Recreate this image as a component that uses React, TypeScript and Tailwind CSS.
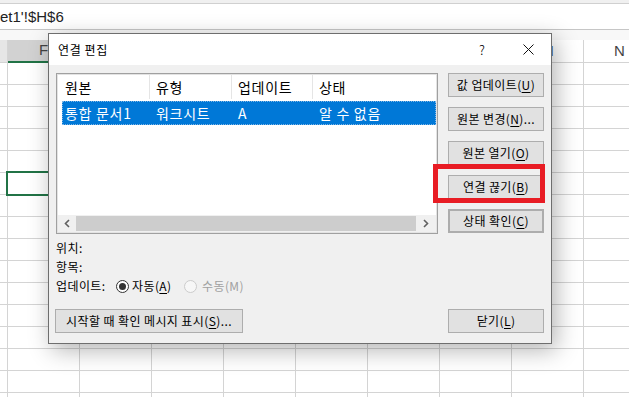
import React from "react";

const cols = ["F", "G", "H", "I", "J", "K", "L", "M", "N"];
const rows = Array.from({ length: 16 }, (_, i) => i);

function Btn({ children, className = "" }: { children: React.ReactNode; className?: string }) {
  return (
    <div
      className={`h-[24px] flex items-center justify-center bg-[#e1e1e1] border border-[#adadad] text-[12px] leading-none tracking-[0.4px] text-black ${className}`}
    >
      {children}
    </div>
  );
}

function U({ children }: { children: React.ReactNode }) {
  return <span className="underline underline-offset-2">{children}</span>;
}

function Sheet() {
  return (
    <div className="font-['Liberation_Sans',sans-serif]">
      <div className="h-[4px] bg-[#f0f0f0] border-b border-[#d0d0d0]" />
      <div className="h-[26px] border-b border-[#c6c6c6] flex items-center text-[15px] leading-none text-[#222]">
        et1'!$H$6
      </div>
      <div className="h-[10px] bg-[#f8f8f8]" />

      {/* column headers */}
      <div className="flex h-[23px]">
        <div className="w-[8px] shrink-0 bg-[#e6e6e6] border-r border-b border-[#d4d4d4]" />
        {cols.map((c) => (
          <div
            key={c}
            className={
              c === "F"
                ? "w-[72px] shrink-0 flex items-center justify-center bg-[#d2d2d2] border-r border-[#d4d4d4] border-b-2 border-b-[#217346] text-[15px] text-[#444]"
                : "w-[72px] shrink-0 flex items-center justify-center bg-white border-r border-b border-[#d4d4d4] text-[15px] text-[#444]"
            }
          >
            {c}
          </div>
        ))}
      </div>

      {/* grid */}
      {rows.map((r) => (
        <div key={r} className="flex h-[22px]">
          <div className="w-[8px] shrink-0 border-r border-b border-[#d4d4d4]" />
          {cols.map((c) => (
            <div key={c} className="w-[72px] shrink-0 relative border-r border-b border-[#d4d4d4]">
              {r === 5 && c === "F" && (
                <div className="absolute -left-[2px] -top-[2px] w-[75px] h-[25px] border-2 border-[#217346]" />
              )}
            </div>
          ))}
        </div>
      ))}
    </div>
  );
}

function EditLinksDialog() {
  return (
    <div className="absolute left-[48px] top-[33px] w-[504px] h-[311px] border border-[#6e6e6e] bg-[#f0f0f0] shadow-[4px_6px_22px_rgba(0,0,0,0.3)] font-['Noto_Sans_CJK_KR',sans-serif] text-black">
      {/* title bar */}
      <div className="h-[31px] bg-white flex items-center">
        <span className="pl-[9px] text-[12px] leading-none tracking-[0.6px] flex-1">연결 편집</span>
        <div className="w-[46px] h-full flex items-center justify-center text-[13px] leading-none font-light">?</div>
        <div className="w-[46px] h-full flex items-center justify-center">
          <svg width="11" height="11" viewBox="0 0 11 11">
            <path d="M0.5 0.5 L10.5 10.5 M10.5 0.5 L0.5 10.5" stroke="#111" strokeWidth="1" />
          </svg>
        </div>
      </div>

      {/* body */}
      <div className="pl-[7px] pr-[7px] pt-[8px]">
        <div className="flex gap-[10px]">
          <div className="w-[382px]">
            {/* list */}
            <div className="h-[161px] border border-[#a0a0a0] bg-white flex flex-col">
              <div className="flex-1 border border-[#e3e3e3] flex flex-col">
                <div className="flex h-[24px] text-[14px] leading-none tracking-[0.7px]">
                  <div className="w-[92px] border-r border-[#e5e5e5] flex items-center pl-[7px]">원본</div>
                  <div className="w-[82px] border-r border-[#e5e5e5] flex items-center pl-[6px]">유형</div>
                  <div className="w-[81px] border-r border-[#e5e5e5] flex items-center pl-[6px]">업데이트</div>
                  <div className="flex-1 flex items-center pl-[6px]">상태</div>
                </div>
                <div className="mt-[2px] ml-[4px] h-[24px] bg-[#0078d7] border border-dotted border-[#7fb6e6] flex text-[14px] leading-none tracking-[0.7px] text-white">
                  <div className="w-[87px] flex items-center pl-[2px]">통합 문서1</div>
                  <div className="w-[82px] flex items-center pl-[6px]">워크시트</div>
                  <div className="w-[81px] flex items-center pl-[6px]">A</div>
                  <div className="flex-1 flex items-center pl-[6px]">알 수 없음</div>
                </div>
                <div className="flex-1" />
                {/* horizontal scrollbar */}
                <div className="h-[17px] bg-[#f0f0f0] flex items-center">
                  <div className="w-[17px] h-full flex items-center justify-center">
                    <svg width="6" height="9" viewBox="0 0 6 9">
                      <path d="M5 1 L1.5 4.5 L5 8" fill="none" stroke="#606060" strokeWidth="1.6" />
                    </svg>
                  </div>
                  <div className="w-[340px] h-[15px] bg-[#cdcdcd] ml-px" />
                  <div className="flex-1 h-full flex items-center justify-center">
                    <svg width="6" height="9" viewBox="0 0 6 9">
                      <path d="M1 1 L4.5 4.5 L1 8" fill="none" stroke="#606060" strokeWidth="1.6" />
                    </svg>
                  </div>
                </div>
              </div>
            </div>

            {/* info */}
            <div className="mt-[4px] text-[12px] leading-none tracking-[0.4px]">
              <div className="h-[19px] flex items-center">위치:</div>
              <div className="h-[19px] flex items-center">항목:</div>
              <div className="h-[20px] flex items-center">
                <span className="w-[60px]">업데이트:</span>
                <span className="w-[13px] h-[13px] rounded-full border border-[#333] bg-white flex items-center justify-center">
                  <span className="w-[7px] h-[7px] rounded-full bg-[#333]" />
                </span>
                <span className="w-[55px] pl-[3px]">
                  자동(<U>A</U>)
                </span>
                <span className="w-[13px] h-[13px] rounded-full border border-[#cccccc] bg-[#f7f7f7]" />
                <span className="pl-[5px] text-[#a0a0a0]">수동(M)</span>
              </div>
            </div>
          </div>

          {/* right buttons */}
          <div className="w-[96px] flex flex-col gap-[10px]">
            <Btn>
              값 업데이트(<U>U</U>)
            </Btn>
            <Btn>
              원본 변경(<U>N</U>)...
            </Btn>
            <Btn>
              원본 열기(<U>O</U>)
            </Btn>
            <Btn>
              연결 끊기(<U>B</U>)
            </Btn>
            <Btn className="border-2 border-[#0078d7]">
              상태 확인(<U>C</U>)
            </Btn>
          </div>
        </div>

        {/* bottom buttons */}
        <div className="mt-[13px] -ml-px flex justify-between">
          <Btn className="w-[188px]">
            시작할 때 확인 메시지 표시(<U>S</U>)...
          </Btn>
          <Btn className="w-[96px]">
            닫기(<U>L</U>)
          </Btn>
        </div>
      </div>

      {/* annotation */}
      <div className="absolute left-[384px] top-[130px] w-[112px] h-[39px] border-[5px] border-[#e81c24]" />
    </div>
  );
}

export default function App() {
  return (
    <div className="relative w-[629px] h-[397px] overflow-hidden bg-white">
      <Sheet />
      <EditLinksDialog />
    </div>
  );
}
